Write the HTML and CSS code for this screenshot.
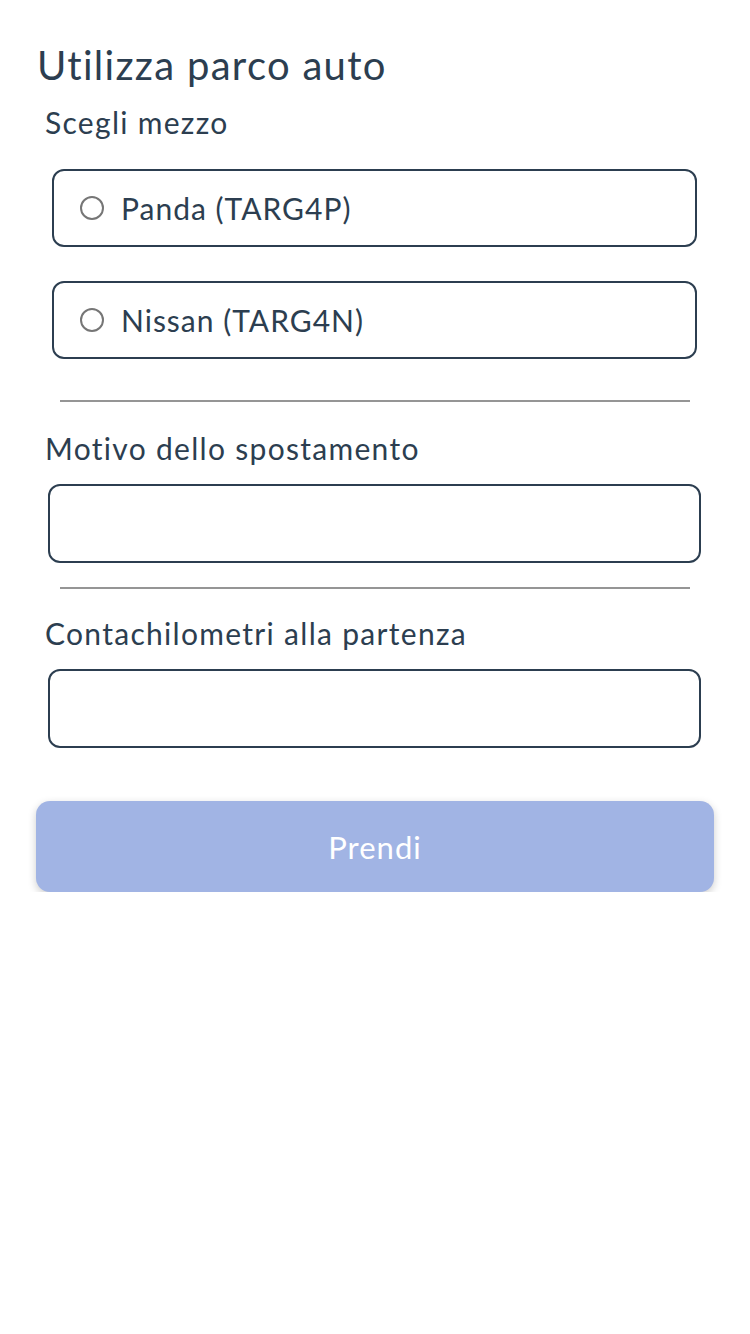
FILE: index.html
```html
<!DOCTYPE html>
<html lang="it">
<head>
<meta charset="utf-8">
<title>Utilizza parco auto</title>
<link rel="stylesheet" href="styles.css">
</head>
<body>
<main class="page">
  <h1 class="title">Utilizza parco auto</h1>
  <section class="field">
    <h2 class="label">Scegli mezzo</h2>
    <div class="options">
      <label class="option"><span class="radio"></span><span class="option-text">Panda (TARG4P)</span></label>
      <label class="option"><span class="radio"></span><span class="option-text">Nissan (TARG4N)</span></label>
    </div>
  </section>
  <hr class="divider divider-first">
  <section class="field">
    <h2 class="label">Motivo dello spostamento</h2>
    <div class="input"></div>
  </section>
  <hr class="divider divider-second">
  <section class="field">
    <h2 class="label">Contachilometri alla partenza</h2>
    <div class="input"></div>
  </section>
  <button class="button" type="button">Prendi</button>
</main>
</body>
</html>
```
FILE: styles.css
```css
* { box-sizing: border-box; }
html, body { margin: 0; padding: 0; background: #fff; }
body {
  font-family: Lato, "Noto Sans", sans-serif;
  color: #2c3e50;
  width: 750px;
}
.page {
  padding: 38px 36px 0 36px;
  display: flex;
  flex-direction: column;
}
.title {
  margin: 0 0 10px 1px;
  font-size: 40px;
  font-weight: 400;
  line-height: 54px;
  letter-spacing: 1.3px;
}
.label {
  margin: 0 0 0 9px;
  font-size: 30px;
  font-weight: 400;
  line-height: 40px;
  letter-spacing: 1.3px;
}
.options {
  display: flex;
  flex-direction: column;
  gap: 34px;
  padding: 27px 17px 0 16px;
}
.option {
  height: 78px;
  border: 2px solid #2c3e50;
  border-radius: 12px;
  display: flex;
  align-items: center;
  padding-left: 26px;
  gap: 17px;
}
.radio {
  width: 24px;
  height: 24px;
  border: 2px solid #767676;
  border-radius: 50%;
  flex: none;
}
.option-text {
  font-size: 30px;
  line-height: 40px;
  letter-spacing: 1px;
}
.divider {
  border: 0;
  height: 2px;
  background: #959595;
  margin: 0 24px;
}
.divider-first { margin-top: 41px; margin-bottom: 26px; }
.divider-second { margin-top: 24px; margin-bottom: 24px; }
.input {
  height: 79px;
  margin: 16px 13px 0 12px;
  border: 2px solid #2c3e50;
  border-radius: 12px;
}
.button {
  margin-top: 53px;
  height: 91px;
  border: 0;
  border-radius: 14px;
  background: #a1b4e4;
  color: #fff;
  font-family: Lato, "Noto Sans", sans-serif;
  font-size: 31px;
  letter-spacing: 1px;
  box-shadow: 0 3px 8px rgba(0,0,0,0.2);
}
```
